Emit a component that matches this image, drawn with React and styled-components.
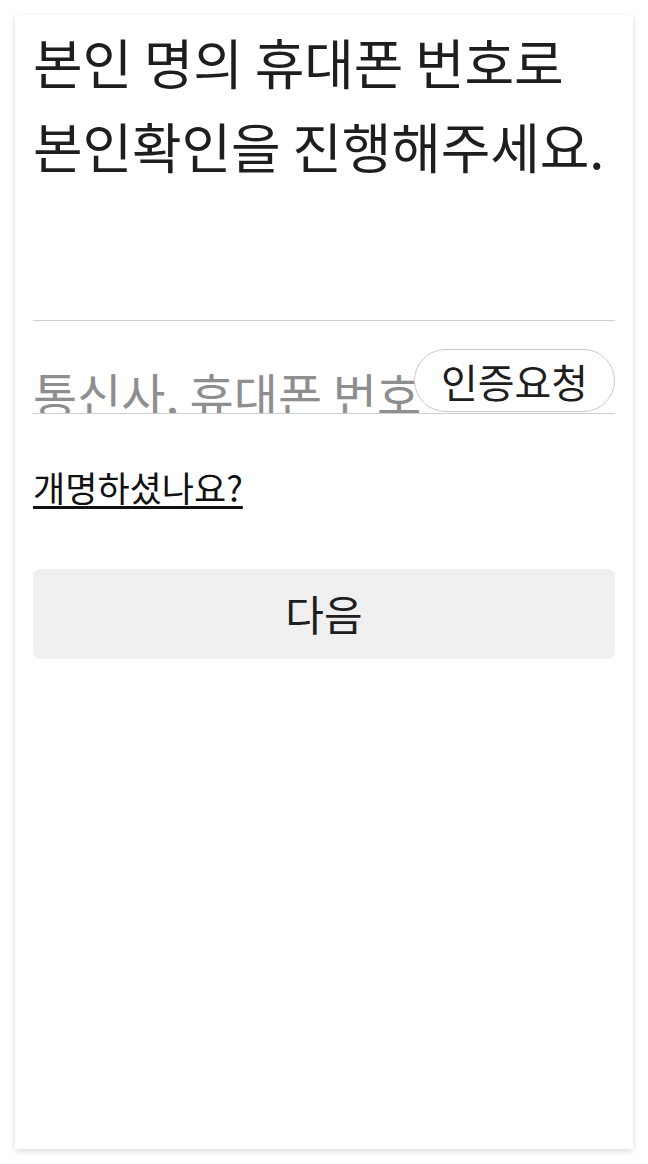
import styled, { createGlobalStyle } from 'styled-components';

const GlobalStyle = createGlobalStyle`
    * {
        box-sizing: border-box;
    }
    body {
        margin: 0;
        background: #ffffff;
        font-family: 'Noto Sans CJK KR', 'Noto Sans', sans-serif;
        color: #1e1e1e;
    }
`;

const Page = styled.div`
    padding: 15px;
`;

const Card = styled.section`
    height: 1134px;
    padding: 5px 18px 0;
    background: #ffffff;
    box-shadow: 0 2px 6px rgba(0, 0, 0, 0.15);
    display: flex;
    flex-direction: column;
`;

const Title = styled.h1`
    margin: 0;
    font-size: 54px;
    line-height: 84px;
    font-weight: 400;
    letter-spacing: -0.2px;
`;

const Field = styled.div`
    position: relative;
    margin-top: ${({ $gap }) => $gap}px;
`;

const Input = styled.input`
    display: block;
    width: 100%;
    height: ${({ $height }) => $height}px;
    padding: ${({ $padTop }) => $padTop}px 0 0;
    border: none;
    border-bottom: 1px solid #cfcfcf;
    border-radius: 0;
    outline: none;
    background: transparent;
    font-family: inherit;
    font-size: 48px;
    color: #1e1e1e;

    &::placeholder {
        color: #8e8e8e;
    }
`;

const RequestButton = styled.button`
    position: absolute;
    top: 27px;
    right: 0;
    width: 201px;
    height: 63px;
    padding: 0;
    border: 1px solid #c9c9c9;
    border-radius: 32px;
    background: #ffffff;
    font-family: inherit;
    font-size: 40px;
    color: #1e1e1e;
`;

const RenameLink = styled.a`
    align-self: flex-start;
    margin-top: 53px;
    font-size: 35px;
    line-height: 40px;
    color: #111111;
    text-decoration: underline;
    text-decoration-thickness: 3px;
    text-underline-offset: 4px;
`;

const NextButton = styled.button`
    margin-top: 62px;
    width: 100%;
    height: 90px;
    border: none;
    border-radius: 7px;
    background: #f0f0f0;
    font-family: inherit;
    font-size: 42px;
    padding: 0 0 4px;
    color: #1e1e1e;
`;

export default function App() {
    return (
        <>
            <GlobalStyle />
            <Page>
                <Card>
                    <Title>
                        본인 명의 휴대폰 번호로
                        <br />
                        본인확인을 진행해주세요.
                    </Title>
                    <Field $gap={43}>
                        <Input $height={90} $padTop={30} aria-label="이름" />
                    </Field>
                    <Field $gap={1}>
                        <Input $height={92} $padTop={50} placeholder="통신사, 휴대폰 번호" />
                        <RequestButton type="button">인증요청</RequestButton>
                    </Field>
                    <RenameLink href="#">개명하셨나요?</RenameLink>
                    <NextButton type="button">다음</NextButton>
                </Card>
            </Page>
        </>
    );
}
